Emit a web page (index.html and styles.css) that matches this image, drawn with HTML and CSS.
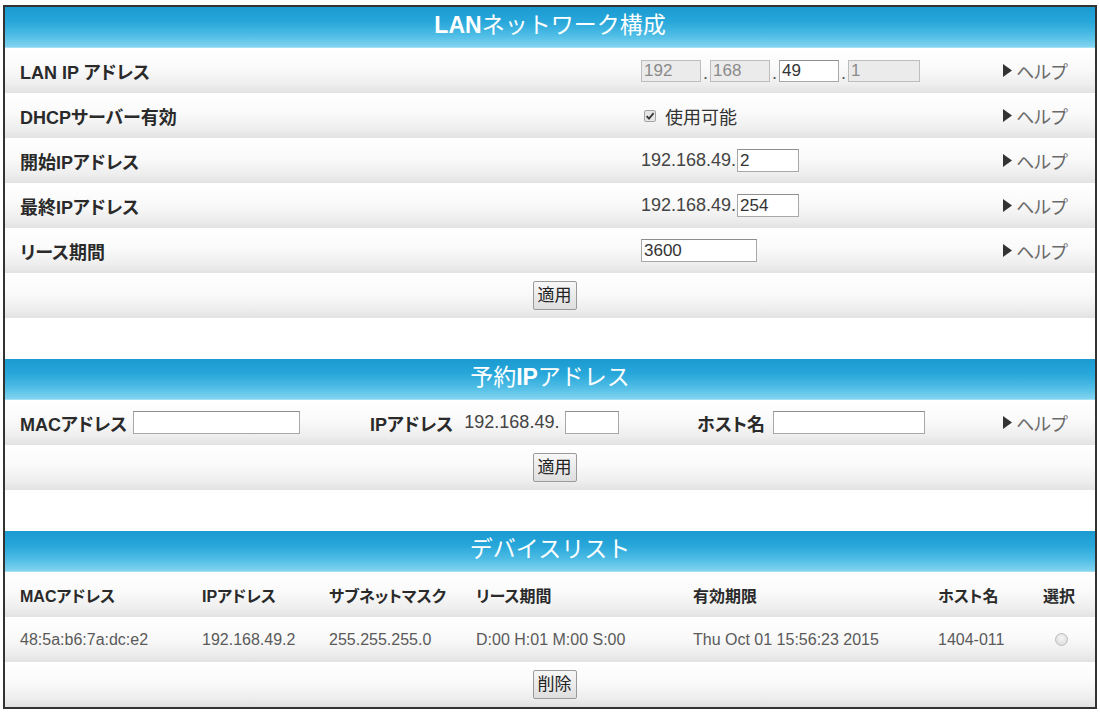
FILE: index.html
```html
<!DOCTYPE html>
<html lang="ja">
<head>
<meta charset="utf-8">
<title>LANネットワーク構成</title>
<link rel="stylesheet" href="styles.css">
</head>
<body>
<div class="frame">
  <div class="sec-head"><b>LAN</b>ネットワーク構成</div>

  <div class="row cfg">
    <div class="lbl">LAN IP アドレス</div>
    <div class="val">
      <input class="tb ip" type="text" value="192" disabled><span class="dot">.</span><input class="tb ip" type="text" value="168" disabled><span class="dot">.</span><input class="tb ip" type="text" value="49"><span class="dot">.</span><input class="tb ip" type="text" value="1" disabled>
    </div>
    <a class="help"><svg class="tri" width="9" height="13" viewBox="0 0 9 13"><path d="M0 0 L9 6.5 L0 13Z"/></svg>ヘルプ</a>
  </div>

  <div class="row cfg">
    <div class="lbl">DHCPサーバー有効</div>
    <div class="val">
      <svg class="chk" width="12" height="12" viewBox="0 0 12 12"><rect x="0.5" y="0.5" width="11" height="11" rx="1.5" fill="#e6e6e6" stroke="#a4a4a4"/><path d="M2.6 6.2 L5 8.6 L9.6 3.2" fill="none" stroke="#3a3a3a" stroke-width="1.8"/></svg><span class="chk-txt">使用可能</span>
    </div>
    <a class="help"><svg class="tri" width="9" height="13" viewBox="0 0 9 13"><path d="M0 0 L9 6.5 L0 13Z"/></svg>ヘルプ</a>
  </div>

  <div class="row cfg">
    <div class="lbl">開始IPアドレス</div>
    <div class="val">192.168.49.<input class="tb oct" type="text" value="2"></div>
    <a class="help"><svg class="tri" width="9" height="13" viewBox="0 0 9 13"><path d="M0 0 L9 6.5 L0 13Z"/></svg>ヘルプ</a>
  </div>

  <div class="row cfg">
    <div class="lbl">最終IPアドレス</div>
    <div class="val">192.168.49.<input class="tb oct" type="text" value="254"></div>
    <a class="help"><svg class="tri" width="9" height="13" viewBox="0 0 9 13"><path d="M0 0 L9 6.5 L0 13Z"/></svg>ヘルプ</a>
  </div>

  <div class="row cfg">
    <div class="lbl">リース期間</div>
    <div class="val"><input class="tb lease" type="text" value="3600"></div>
    <a class="help"><svg class="tri" width="9" height="13" viewBox="0 0 9 13"><path d="M0 0 L9 6.5 L0 13Z"/></svg>ヘルプ</a>
  </div>

  <div class="row btn-row"><button class="btn" type="button">適用</button></div>

  <div class="spacer"></div>

  <div class="sec-head">予約<b>IP</b>アドレス</div>

  <div class="row resv">
    <div class="seg seg1"><span class="lbl">MACアドレス</span><input class="tb mac" type="text"></div>
    <div class="seg seg2"><span class="lbl">IPアドレス</span><span class="plain">192.168.49.</span><input class="tb short" type="text"></div>
    <div class="seg seg3"><span class="lbl">ホスト名</span><input class="tb host" type="text"></div>
    <a class="help"><svg class="tri" width="9" height="13" viewBox="0 0 9 13"><path d="M0 0 L9 6.5 L0 13Z"/></svg>ヘルプ</a>
  </div>

  <div class="row btn-row"><button class="btn" type="button">適用</button></div>

  <div class="spacer"></div>

  <div class="sec-head">デバイスリスト</div>

  <div class="row tbl thead">
    <div>MACアドレス</div>
    <div>IPアドレス</div>
    <div>サブネットマスク</div>
    <div>リース期間</div>
    <div>有効期限</div>
    <div>ホスト名</div>
    <div>選択</div>
  </div>

  <div class="row tbl tdata">
    <div>48:5a:b6:7a:dc:e2</div>
    <div>192.168.49.2</div>
    <div>255.255.255.0</div>
    <div>D:00 H:01 M:00 S:00</div>
    <div>Thu Oct 01 15:56:23 2015</div>
    <div>1404-011</div>
    <div><span class="radio"></span></div>
  </div>

  <div class="row btn-row"><button class="btn" type="button">削除</button></div>
</div>
</body>
</html>
```

FILE: styles.css
```css
html, body {
  margin: 0;
  padding: 0;
  background: #ffffff;
}

body {
  font-family: "Liberation Sans", "Noto Sans CJK JP", sans-serif;
  font-feature-settings: "palt";
  color: #333333;
}

.frame {
  margin: 5px 0 0 3px;
  width: 1090px;
  border: 2px solid #333333;
  background: #ffffff;
}

.sec-head {
  height: 41px;
  box-sizing: border-box;
  padding-bottom: 4px;
  display: flex;
  align-items: center;
  justify-content: center;
  background: linear-gradient(#1a9ad0 0%, #26a6d9 35%, #4dbce5 70%, #82d4f0 100%);
  border-bottom: 1px solid #a6e2f5;
  color: #ffffff;
  font-size: 23px;
  font-weight: normal;
  font-feature-settings: normal;
  line-height: 1;
}

.sec-head b {
  font-weight: bold;
}

.row {
  height: 45px;
  box-sizing: border-box;
  background: linear-gradient(#ffffff 0%, #fafafa 45%, #eeeeee 80%, #e2e2e2 100%);
}

.lbl {
  font-size: 18px;
  font-weight: bold;
  color: #2a2a2a;
  white-space: nowrap;
}

.cfg {
  display: grid;
  grid-template-columns: 621px 362px 1fr;
  align-items: center;
  padding-left: 15px;
}

.val {
  display: flex;
  align-items: center;
  font-size: 18px;
  color: #444444;
}

.tb {
  box-sizing: border-box;
  height: 23px;
  margin: 0;
  padding: 0 2px;
  border: 1px solid #a8a8a8;
  border-top-color: #8e8e8e;
  border-radius: 0;
  background: #ffffff;
  font-family: "Liberation Sans", "Noto Sans CJK JP", sans-serif;
  font-size: 17px;
  color: #333333;
  outline: none;
}

.tb:disabled {
  background: #ebebeb;
  color: #8a8a8a;
  border-color: #bdbdbd;
}

.ip {
  width: 60px;
  height: 22px;
}

.ip:last-child {
  width: 72px;
}

.dot {
  width: 9px;
  text-align: center;
  font-size: 18px;
  color: #555555;
  align-self: flex-end;
  line-height: 18px;
}

.oct {
  width: 62px;
  margin-left: 1px;
}

.lease {
  width: 116px;
}

.chk {
  margin-left: 3px;
  margin-right: 9px;
}

.chk-txt {
  font-size: 18px;
  color: #333333;
}

.help {
  display: flex;
  align-items: center;
  font-size: 18px;
  color: #6a6a6a;
  text-decoration: none;
}

.tri {
  fill: #333333;
  margin-right: 4px;
}

.btn-row {
  display: flex;
  align-items: center;
  justify-content: center;
  padding-left: 9px;
}

.btn {
  height: 29px;
  padding: 0 4px;
  margin: 0;
  border: 1px solid #9a9a9a;
  border-radius: 2px;
  background: linear-gradient(#f7f7f7, #dedede);
  font-family: "Liberation Sans", "Noto Sans CJK JP", sans-serif;
  font-feature-settings: "palt";
  font-size: 17px;
  color: #222222;
  line-height: 1;
}

.spacer {
  height: 41px;
  background: #ffffff;
}

.resv {
  display: flex;
  align-items: center;
  padding-left: 15px;
}

.seg {
  display: flex;
  align-items: center;
}

.seg1 {
  width: 350px;
}

.seg2 {
  width: 327px;
}

.seg3 {
  width: 306px;
}

.mac {
  width: 167px;
  margin-left: 6px;
}

.plain {
  font-size: 18px;
  color: #444444;
  margin-left: 11px;
}

.short {
  width: 54px;
  margin-left: 6px;
}

.host {
  width: 152px;
  margin-left: 8px;
}

.tbl {
  display: grid;
  grid-template-columns: 182px 127px 147px 217px 245px 105px 1fr;
  align-items: center;
  padding-left: 15px;
  font-size: 16px;
  white-space: nowrap;
}

.thead {
  font-weight: bold;
  color: #2a2a2a;
}

.tdata {
  color: #5a5a5a;
}

.radio {
  display: block;
  width: 13px;
  height: 13px;
  margin-left: 12px;
  box-sizing: border-box;
  border: 1px solid #bdbdbd;
  border-radius: 50%;
  background: radial-gradient(circle at 50% 40%, #f6f6f6, #d6d6d6);
}
```
